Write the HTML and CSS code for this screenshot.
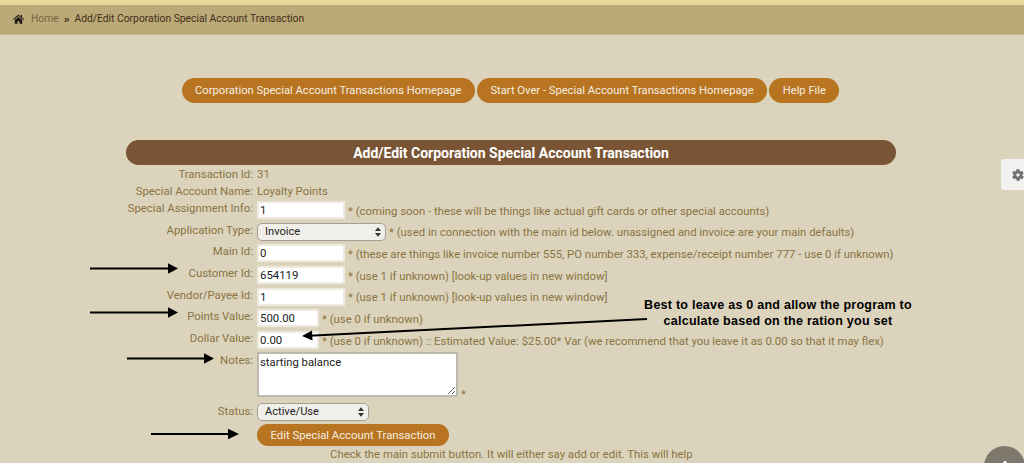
FILE: index.html
```html
<!DOCTYPE html>
<html lang="en">
<head>
  <meta charset="UTF-8">
  <meta name="viewport" content="width=device-width, initial-scale=1.0">
  <title>Add/Edit Corporation Special Account Transaction</title>
  <link rel="stylesheet" href="styles.css">
</head>
<body>
  <div class="top-strip"></div>

  <!-- Breadcrumb -->
  <div class="breadcrumb">
    <svg class="home-icon" viewBox="0 0 16 14" aria-hidden="true">
      <path d="M8 .6 0 7.400l.9 1L8 2.500l7.100 5.900.9-1-3-2.500V1.200h-2v3L8 .6zM2.600 8.600V14h3.900v-3.600h3V14h3.900V8.600L8 4.100 2.600 8.600z"/>
    </svg>
    <a class="crumb-link" href="#">Home</a>
    <span class="crumb-sep">&raquo;</span>
    <span>Add/Edit Corporation Special Account Transaction</span>
  </div>

  <!-- Top buttons -->
  <div class="button-row">
    <a class="btn" href="#">Corporation Special Account Transactions Homepage</a>
    <a class="btn" href="#">Start Over - Special Account Transactions Homepage</a>
    <a class="btn" href="#">Help File</a>
  </div>

  <div class="panel">
    <h1 class="panel-title">Add/Edit Corporation Special Account Transaction</h1>

    <div class="form-row row-text">
      <div class="form-label">Transaction Id:</div>
      <div class="form-value">31</div>
    </div>
    <div class="form-row row-text">
      <div class="form-label">Special Account Name:</div>
      <div class="form-value">Loyalty Points</div>
    </div>
    <div class="form-row">
      <div class="form-label">Special Assignment Info:</div>
      <div class="form-value">
        <input class="field" type="text" value="1">
        <span class="hint">* (coming soon - these will be things like actual gift cards or other special accounts)</span>
      </div>
    </div>
    <div class="form-row">
      <div class="form-label">Application Type:</div>
      <div class="form-value">
        <span class="select select-wide">Invoice<svg class="updown" viewBox="0 0 7 11"><path d="M3.500 0 7 4.300H0zM3.500 11 0 6.700h7z"/></svg></span>
        <span class="hint">* (used in connection with the main id below. unassigned and invoice are your main defaults)</span>
      </div>
    </div>
    <div class="form-row">
      <div class="form-label">Main Id:</div>
      <div class="form-value">
        <input class="field" type="text" value="0">
        <span class="hint">* (these are things like invoice number 555, PO number 333, expense/receipt number 777 - use 0 if unknown)</span>
      </div>
    </div>
    <div class="form-row">
      <div class="form-label">Customer Id:</div>
      <div class="form-value">
        <input class="field" type="text" value="654119">
        <span class="hint">* (use 1 if unknown) [look-up values in new window]</span>
      </div>
    </div>
    <div class="form-row">
      <div class="form-label">Vendor/Payee Id:</div>
      <div class="form-value">
        <input class="field" type="text" value="1">
        <span class="hint">* (use 1 if unknown) [look-up values in new window]</span>
      </div>
    </div>
    <div class="form-row">
      <div class="form-label">Points Value:</div>
      <div class="form-value">
        <input class="field field-small" type="text" value="500.00">
        <span class="hint">* (use 0 if unknown)</span>
      </div>
    </div>
    <div class="form-row">
      <div class="form-label">Dollar Value:</div>
      <div class="form-value">
        <input class="field field-small" type="text" value="0.00">
        <span class="hint">* (use 0 if unknown) :: Estimated Value: $25.00* Var (we recommend that you leave it as 0.00 so that it may flex)</span>
      </div>
    </div>
    <div class="form-row row-notes">
      <div class="form-label">Notes:</div>
      <div class="form-value">
        <textarea class="notes">starting balance</textarea>
        <span class="hint hint-star">*</span>
      </div>
    </div>
    <div class="form-row row-status">
      <div class="form-label">Status:</div>
      <div class="form-value">
        <span class="select select-status">Active/Use<svg class="updown" viewBox="0 0 7 11"><path d="M3.500 0 7 4.300H0zM3.500 11 0 6.700h7z"/></svg></span>
      </div>
    </div>
    <div class="form-row row-submit">
      <div class="form-label"></div>
      <div class="form-value"><a class="btn btn-submit" href="#">Edit Special Account Transaction</a></div>
    </div>
    <div class="footnote">Check the main submit button. It will either say add or edit. This will help</div>
  </div>

  <!-- Annotations drawn over the screenshot -->
  <svg class="arrows" viewBox="0 0 1024 463" aria-hidden="true">
    <g stroke="#000" stroke-width="2">
      <line x1="90" y1="268.500" x2="170" y2="268.500"/>
      <line x1="90" y1="312.500" x2="170" y2="312.500"/>
      <line x1="127" y1="358.500" x2="206" y2="358.500"/>
      <line x1="151" y1="434" x2="230" y2="434"/>
      <line x1="304" y1="336" x2="647" y2="319"/>
    </g>
    <path d="M178 268.500l-10-5.300v10.600zM178 312.500l-10-5.300v10.600zM214 358.500l-10-5.300v10.600zM239 434l-11-5.300v10.600zM302 336l10-5.500.5 10z"/>
  </svg>
  <div class="callout">Best to leave as 0 and allow the program to<br>calculate based on the ration you set</div>

  <div class="gear-tab">
    <svg class="gear-icon" viewBox="0 0 24 24" aria-hidden="true">
      <path d="M19.400 13c.1-.3.100-.7.100-1s0-.7-.1-1l2.100-1.600c.2-.2.200-.4.100-.6l-2-3.500c-.1-.2-.4-.3-.6-.2l-2.500 1c-.5-.4-1.100-.7-1.700-1l-.4-2.600c0-.3-.2-.4-.5-.4h-4c-.3 0-.5.100-.5.400l-.4 2.600c-.6.300-1.200.6-1.700 1l-2.500-1c-.2-.1-.5 0-.6.200l-2 3.500c-.1.200-.1.400.1.600L4.600 11c-.1.300-.1.700-.1 1s0 .7.100 1l-2.100 1.600c-.2.200-.2.400-.1.600l2 3.500c.1.200.4.300.6.200l2.500-1c.5.400 1.100.7 1.700 1l.4 2.600c0 .3.200.4.500.4h4c.3 0 .5-.1.500-.4l.4-2.600c.6-.3 1.200-.6 1.700-1l2.500 1c.2.100.5 0 .6-.2l2-3.500c.1-.2.100-.4-.1-.6L19.400 13zM12 15a3 3 0 1 1 0-6 3 3 0 0 1 0 6z"/>
    </svg>
  </div>
  <div class="round-clip">
    <div class="round-btn"><span class="round-chevron"></span></div>
  </div>
</body>
</html>
```

FILE: styles.css
```css
html, body {
  height: 100%;
}

body {
  margin: 0;
  background-color: #dbd3bb;
  color: #8a7443;
  font-family: Roboto, "Liberation Sans", sans-serif;
  font-size: 11.350px;
  line-height: 16px;
  overflow: hidden;
}

a {
  text-decoration: none;
}

.top-strip {
  height: 5px;
  background-color: #e6d99b;
}

/* Breadcrumb */
.breadcrumb {
  box-sizing: border-box;
  display: flex;
  align-items: center;
  height: 30px;
  padding-left: 13px;
  padding-bottom: 1px;
  background-color: #bbaa78;
  border-bottom: 1px solid #c5b68c;
  color: #3f2d17;
  font-size: 10.300px;
}

.home-icon {
  width: 11px;
  height: 10px;
  fill: #1c1710;
  margin-right: 7px;
}

.crumb-link {
  color: #7d6444;
}

.crumb-sep {
  margin: 0 5px;
  font-size: 11.500px;
  font-weight: bold;
}

/* Buttons */
.button-row {
  display: flex;
  justify-content: center;
  gap: 2px;
  margin-top: 43px;
  padding-right: 3px;
}

.btn {
  display: block;
  height: 25px;
  padding: 0 13.500px;
  border-radius: 13px;
  background-color: #b87421;
  color: #f5eee0;
  font-size: 11.200px;
  line-height: 26px;
  white-space: nowrap;
}

/* Panel */
.panel {
  width: 770px;
  margin: 37px 0 0 126px;
}

.panel-title {
  height: 25px;
  margin: 0;
  border-radius: 13px;
  background-color: #7a5535;
  color: #fff;
  font-size: 14px;
  font-weight: bold;
  line-height: 26px;
  text-align: center;
}

.form-row {
  display: flex;
  height: 21.700px;
  gap: 4px;
}

.row-text {
  height: 17px;
}

.row-notes {
  height: 51px;
}

.row-status {
  height: 21px;
}

.row-submit {
  height: 24.500px;
}

.form-label {
  flex: 0 0 127px;
  padding-top: 1px;
  text-align: right;
  white-space: nowrap;
}

.form-value {
  display: flex;
  align-items: flex-start;
  gap: 3px;
  white-space: nowrap;
}

.row-text .form-value {
  padding-top: 1px;
}

.field {
  box-sizing: border-box;
  width: 88px;
  height: 18px;
  margin: 2px 0 0;
  padding: 0 1px;
  border: 2px solid #eeeadf;
  background-color: #fff;
  color: #222;
  font-family: inherit;
  font-size: 11.400px;
}

.field-small {
  width: 62px;
}

.hint {
  padding-top: 3.500px;
}

.select {
  box-sizing: border-box;
  display: flex;
  align-items: center;
  justify-content: space-between;
  height: 18px;
  margin-top: 2px;
  padding: 0 4px 0 7px;
  border: 1px solid #a39f96;
  border-radius: 5px;
  background-color: #f1efea;
  color: #222;
  font-size: 11.100px;
}

.select-wide {
  width: 129px;
}

.select-status {
  width: 112px;
  margin-top: 1px;
}

.updown {
  width: 6px;
  height: 10px;
  fill: #333;
}

.notes {
  box-sizing: border-box;
  width: 201px;
  height: 45px;
  margin: 1px 0 0;
  padding: 2px 1px 1px;
  border: 2px solid #bdb9af;
  background-color: #fff;
  color: #222;
  font-family: inherit;
  font-size: 11.300px;
}

.hint-star {
  padding-top: 35px;
}

.btn-submit {
  box-sizing: border-box;
  width: 192px;
  height: 22px;
  margin-top: 1px;
  font-size: 11.300px;
  line-height: 23px;
  text-align: center;
}

.footnote {
  padding-left: 204px;
  line-height: 15px;
}

/* Annotations */
.arrows {
  position: absolute;
  top: 0;
  left: 0;
  width: 1024px;
  height: 463px;
  pointer-events: none;
}

.callout {
  position: absolute;
  top: 297px;
  left: 598px;
  width: 360px;
  color: #000;
  font-family: "Liberation Sans", Arial, sans-serif;
  font-size: 12.500px;
  font-weight: bold;
  line-height: 16px;
  text-align: center;
  letter-spacing: 0.250px;
}

.gear-tab {
  position: absolute;
  top: 159px;
  right: 0;
  display: flex;
  align-items: center;
  width: 23px;
  height: 31px;
  padding-left: 10px;
  box-sizing: border-box;
  border-radius: 3px 0 0 3px;
  background-color: #f1f1ef;
  overflow: hidden;
}

.gear-icon {
  flex: none;
  width: 14px;
  height: 14px;
  fill: #6f6f6f;
}

/* Scroll-to-top button, cut off by the bottom of the window */
.round-clip {
  position: absolute;
  bottom: 0;
  left: 984px;
  width: 40px;
  height: 17px;
  overflow: hidden;
}

.round-btn {
  position: relative;
  width: 41px;
  height: 41px;
  border-radius: 50%;
  background-color: #7d776c;
}

.round-chevron {
  position: absolute;
  top: 16px;
  left: 18px;
  width: 4px;
  height: 4px;
  border-top: 2px solid #fff;
  border-left: 2px solid #fff;
  transform: rotate(45deg);
}
```
